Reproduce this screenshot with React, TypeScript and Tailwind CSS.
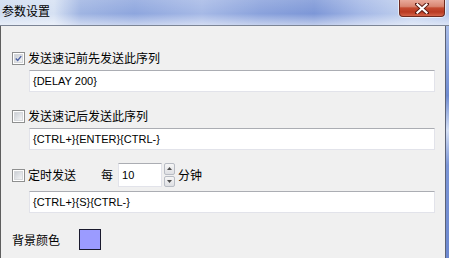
import React from 'react'

const cjk = "font-['Noto_Sans_CJK_SC','Noto_Sans',sans-serif]"
const latin = "font-['Liberation_Sans','Noto_Sans_CJK_SC',sans-serif]"

function CheckBox({ checked }: { checked?: boolean }) {
    return (
        <div className="w-[13px] h-[13px] border border-[#8e8f8f] bg-white p-[1px] shrink-0">
            <div className="w-full h-full bg-[linear-gradient(135deg,#cbcfd5_0%,#f4f5f6_100%)] border border-[#d6d8db] flex items-center justify-center">
                {checked && (
                    <svg width="9" height="9" viewBox="0 0 9 9">
                        <path d="M1 4.5 L3.5 7 L8 1.5" fill="none" stroke="#4c61a3" strokeWidth="1.8" />
                    </svg>
                )}
            </div>
        </div>
    )
}

function TextField({ value }: { value: string }) {
    return (
        <div className={`h-[22px] ml-[28px] mr-[10px] bg-white border border-[#e2e3ea] border-t-[#abadb3] flex items-center pl-[3px] text-[11px] text-black ${latin}`}>
            {value}
        </div>
    )
}

function CheckRow({ label, checked }: { label: string; checked?: boolean }) {
    return (
        <div className="h-4 flex items-center pl-[11px] gap-[3px]">
            <CheckBox checked={checked} />
            <span className={`text-[12px] leading-4 text-black ${cjk}`}>{label}</span>
        </div>
    )
}

export default function App() {
    return (
        <div className="w-[449px] h-[258px] flex flex-col overflow-hidden bg-[#f0f0f0]">
            {/* glass title bar */}
            <div className="h-[25px] shrink-0 relative bg-[linear-gradient(90deg,#cfdcf1_0%,#d6e1f3_12%,#9fb4e2_18%,#8ea6de_30%,#a6b9e6_45%,#8aa2dc_58%,#7d97d7_70%,#a3b7e6_80%,#c4d3ef_92%,#b6c8ec_100%)]">
                <div className="absolute inset-0 bg-[linear-gradient(180deg,rgba(255,255,255,0.15)_0%,rgba(255,255,255,0)_55%,rgba(255,255,255,0.5)_100%)]" />
                <span className={`absolute left-[2px] top-[3px] text-[12px] leading-[15px] text-black ${cjk}`}>参数设置</span>
                <div className="absolute left-[399px] top-0 w-[46px] h-[17px] rounded-b-[4px] border border-t-0 border-[#6f2a1f] bg-[linear-gradient(180deg,#e9a99a_0%,#d98672_40%,#c44b31_50%,#b93a22_75%,#d4644a_100%)] shadow-[0_0_0_1px_rgba(255,255,255,0.6)] flex items-center justify-center">
                    <svg width="14" height="11" viewBox="0 0 14 11">
                        <path d="M2 1 L12 10 M12 1 L2 10" stroke="#5a1c14" strokeWidth="4" strokeLinecap="square" />
                        <path d="M2.5 1.5 L11.5 9.5 M11.5 1.5 L2.5 9.5" stroke="#ffffff" strokeWidth="2.2" strokeLinecap="square" />
                    </svg>
                </div>
            </div>
            <div className="h-px shrink-0 bg-[#7c8596]" />
            <div className="flex-1 flex">
                <div className="w-px bg-[#5e5e5e]" />
                <div className="flex-1 flex flex-col">
                    <div className="mt-[24px]">
                        <CheckRow label="发送速记前先发送此序列" checked />
                    </div>
                    <div className="mt-[4px]">
                        <TextField value="{DELAY 200}" />
                    </div>
                    <div className="mt-[16px]">
                        <CheckRow label="发送速记后发送此序列" />
                    </div>
                    <div className="mt-[4px]">
                        <TextField value="{CTRL+}{ENTER}{CTRL-}" />
                    </div>
                    <div className="mt-[13px] h-6 flex items-center">
                        <CheckRow label="定时发送" />
                        <span className={`ml-[25px] text-[12px] text-black ${cjk}`}>每</span>
                        <div className={`ml-[5px] w-[44px] h-6 bg-white border border-[#e2e3ea] border-t-[#abadb3] flex items-center pl-[3px] text-[11px] text-black ${latin}`}>10</div>
                        <div className="ml-[2px] w-[11px] h-6 flex flex-col gap-px">
                            <div className="flex-1 border border-[#b8bcc4] rounded-[2px] bg-[linear-gradient(180deg,#f6f6f6,#dedfe3)] flex items-center justify-center">
                                <svg width="5" height="3" viewBox="0 0 5 3"><path d="M0 3 L2.5 0 L5 3 Z" fill="#4d4d4d" /></svg>
                            </div>
                            <div className="flex-1 border border-[#b8bcc4] rounded-[2px] bg-[linear-gradient(180deg,#f6f6f6,#dedfe3)] flex items-center justify-center">
                                <svg width="5" height="3" viewBox="0 0 5 3"><path d="M0 0 L2.5 3 L5 0 Z" fill="#4d4d4d" /></svg>
                            </div>
                        </div>
                        <span className={`ml-[3px] text-[12px] text-black ${cjk}`}>分钟</span>
                    </div>
                    <div className="mt-[4px]">
                        <TextField value="{CTRL+}{S}{CTRL-}" />
                    </div>
                    <div className="mt-[16px] flex items-center pl-[11px]">
                        <span className={`text-[12px] leading-4 text-black ${cjk}`}>背景颜色</span>
                        <div className="ml-[19px] w-[22px] h-[21px] border border-[#1a1a2e] bg-[#9b9bff]" />
                    </div>
                </div>
                <div className="w-px bg-[#5b6275]" />
                <div className="w-[3px] bg-[linear-gradient(180deg,#a8bce8_0%,#6f8bd0_30%,#d5e0f5_45%,#7b95d6_60%,#6d88cf_100%)]" />
            </div>
        </div>
    )
}
